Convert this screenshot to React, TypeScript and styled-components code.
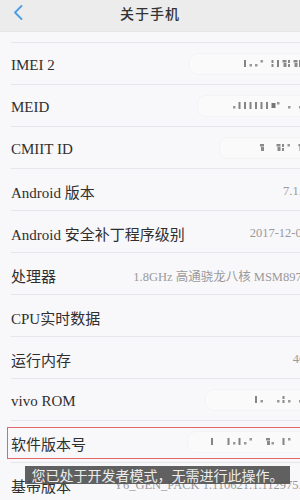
import React from "react";
import styled, { createGlobalStyle } from "styled-components";

const Global = createGlobalStyle`
  html, body { margin: 0; padding: 0; background: #f8f7fa; }
  #root { width: 300px; height: 500px; overflow: hidden; }
`;

const Screen = styled.div`
  position: relative;
  width: 300px;
  height: 500px;
  overflow: hidden;
  background: #f8f7fa;
  font-family: "Liberation Serif", "Noto Sans CJK SC", serif;
`;

const Header = styled.header`
  height: 31px;
  background: #ececec;
  display: grid;
  grid-template-columns: 40px 1fr 40px;
  align-items: start;
  border-bottom: 1px solid #e6e6e8;
`;

const Back = styled.div`
  padding: 5px 0 0 13px;
  display: flex;
`;

const Title = styled.h1`
  margin: 0;
  padding-top: 3px;
  text-align: center;
  font-size: 14px;
  font-weight: 500;
  color: #333;
  letter-spacing: 1px;
  font-family: "Noto Sans CJK SC", sans-serif;
`;

const List = styled.div`
  width: 308px;
  display: flex;
  flex-direction: column;
`;

const Spacer = styled.div`
  height: 10px;
  margin-left: 11px;
  border-bottom: 1px solid #e7e6ea;
`;

const Row = styled.div<{ $highlight?: boolean }>`
  position: relative;
  height: 42px;
  margin-left: 11px;
  border-bottom: 1px solid #e7e6ea;
  display: flex;
  align-items: center;
  justify-content: space-between;
  padding-top: 4px;
  box-sizing: border-box;
  ${(p) =>
    p.$highlight &&
    `
    &::after {
      content: "";
      position: absolute;
      left: -4px;
      right: -10px;
      top: 6px;
      bottom: 3px;
      border: 1.5px solid #e0666a;
      pointer-events: none;
    }
  `}
`;

const Label = styled.span`
  font-size: 15px;
  color: #2f2f2f;
  white-space: nowrap;
`;

const Value = styled.span`
  font-size: 12.5px;
  color: #9a9a9a;
  white-space: nowrap;
`;

const Mosaic = styled.span<{ $w: number }>`
  display: flex;
  align-items: center;
  justify-content: flex-end;
  width: ${(p) => p.$w}px;
  height: 20px;
  margin-top: -4px;
  margin-right: -12px;
  border-radius: 8px;
  background: #fafafb;
  box-shadow: 0 0 0 1px #f3f2f5;
  padding-right: 10px;
`;

const Toast = styled.div`
  position: absolute;
  left: 25px;
  top: 466px;
  width: 265px;
  height: 18px;
  background: rgba(82, 82, 84, 0.92);
  color: #ececec;
  font-size: 14px;
  line-height: 18px;
  text-align: center;
  white-space: nowrap;
  font-family: "Noto Sans CJK SC", sans-serif;
`;

const Chevron = () => (
  <svg width="10" height="15" viewBox="0 0 10 15">
    <path d="M8.5 1 L2 7.5 L8.5 14" fill="none" stroke="#4a9ee8" strokeWidth="1.8" strokeLinecap="round" strokeLinejoin="round" />
  </svg>
);

// pattern: '|' tall bar, ':' stacked dots, '.' low dot, "'" high dot, '=' block, '%' blob, ' ' gap
const Marks = ({ pattern }: { pattern: string }) => {
  const step = 5.5;
  const w = Math.ceil(pattern.length * step);
  const col = "#6f6f6f";
  return (
    <svg width={w} height="12" viewBox={`0 0 ${w} 12`}>
      {pattern.split("").map((c, i) => {
        const x = i * step;
        switch (c) {
          case "|":
            return <rect key={i} x={x} y={2} width={2} height={7} fill={col} opacity={0.85} />;
          case ":":
            return (
              <g key={i} opacity={0.8}>
                <rect x={x} y={2} width={2} height={3} fill={col} />
                <rect x={x} y={6} width={2} height={3} fill={col} />
              </g>
            );
          case ".":
            return <rect key={i} x={x} y={6} width={2.5} height={2.5} fill={col} opacity={0.7} />;
          case "'":
            return <rect key={i} x={x} y={2} width={2.5} height={2.5} fill={col} opacity={0.7} />;
          case "=":
            return <rect key={i} x={x} y={3} width={4} height={5} fill="#5e5e5e" opacity={0.85} />;
          case "%":
            return (
              <g key={i} opacity={0.8}>
                <rect x={x} y={2} width={4} height={2.5} fill={col} />
                <rect x={x + 1} y={5} width={3} height={4} fill={col} />
              </g>
            );
          default:
            return null;
        }
      })}
    </svg>
  );
};

type Item = { label: string; value?: string; mosaic?: { w: number; p: string }; hl?: boolean };

const items: Item[] = [
  { label: "IMEI 2", mosaic: { w: 120, p: "|..' :|%:%||" } },
  { label: "MEID", mosaic: { w: 112, p: ".||||||=' . .'" } },
  { label: "CMIIT ID", mosaic: { w: 90, p: "%  %:' %|" } },
  { label: "Android 版本", value: "7.1.2" },
  { label: "Android 安全补丁程序级别", value: "2017-12-01" },
  { label: "处理器", value: "1.8GHz 高通骁龙八核 MSM8976" },
  { label: "CPU实时数据", value: "2" },
  { label: "运行内存", value: "4G" },
  { label: "vivo ROM", mosaic: { w: 104, p: "|.  .:. .%" } },
  { label: "软件版本号", mosaic: { w: 122, p: "|  |.|.'  %. |'  :" }, hl: true },
  { label: "基带版本", value: "Y6_GEN_PACK 1.110621.1.112975.1" },
];

export default function App() {
  return (
    <Screen>
      <Global />
      <Header>
        <Back>
          <Chevron />
        </Back>
        <Title>关于手机</Title>
        <div />
      </Header>
      <List>
        <Spacer />
        {items.map((it) => (
          <Row key={it.label} $highlight={it.hl}>
            <Label>{it.label}</Label>
            {it.mosaic ? (
              <Mosaic $w={it.mosaic.w}>
                <Marks pattern={it.mosaic.p} />
              </Mosaic>
            ) : (
              <Value>{it.value}</Value>
            )}
          </Row>
        ))}
      </List>
      <Toast>您已处于开发者模式，无需进行此操作。</Toast>
    </Screen>
  );
}
